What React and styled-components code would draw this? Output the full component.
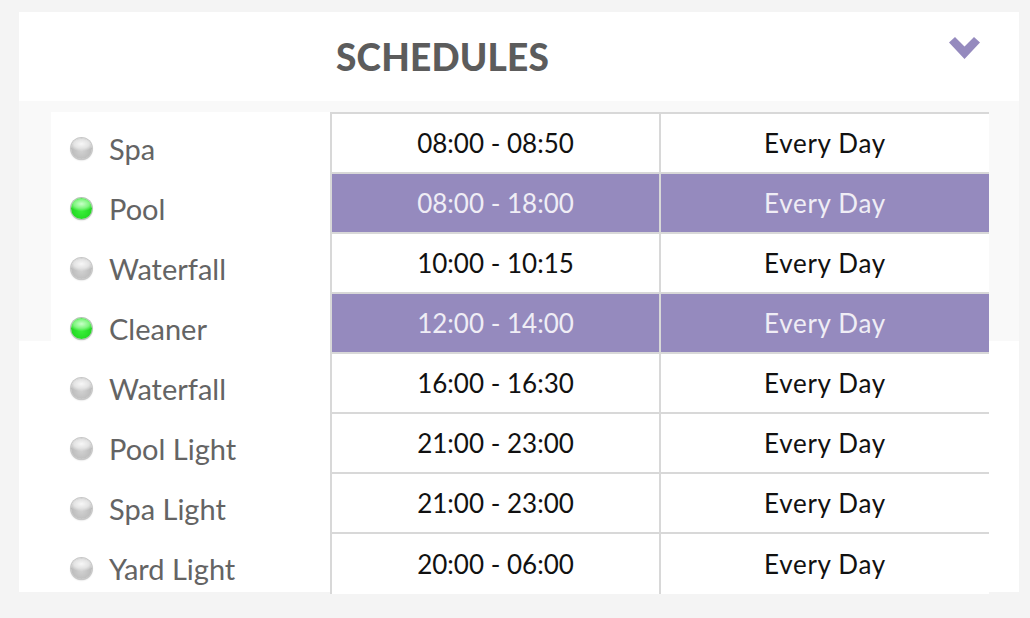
import React from "react";
import styled, { createGlobalStyle } from "styled-components";

const Global = createGlobalStyle`
  html, body { margin: 0; padding: 0; }
  body {
    background: #f4f4f4;
    font-family: Lato, "Open Sans", "Liberation Sans", sans-serif;
  }
`;

const Page = styled.div`
  padding: 12px 11px 26px 19px;
`;

const Card = styled.section`
  width: 1000px;
  height: 580px;
  background: #ffffff;
  display: flex;
  flex-direction: column;
`;

const Header = styled.header`
  flex: none;
  height: 89px;
  display: flex;
  align-items: center;
  padding: 0 39px 0 317px;
  box-sizing: border-box;
`;

const Title = styled.h2`
  margin: 0;
  font-family: Lato, "Open Sans", sans-serif;
  font-weight: 900;
  font-size: 37px;
  color: #5c5c5c;
  letter-spacing: 0.2px;
`;

const Toggle = styled.button`
  margin-left: auto;
  margin-top: -17px;
  border: 0;
  background: none;
  padding: 0;
  width: 31px;
  height: 22px;
  display: flex;
  cursor: pointer;
`;

const Body = styled.div`
  flex: 1;
  min-height: 0;
  display: flex;
  padding: 11px 0 0 32px;
  background: linear-gradient(#f9f9f9 0 240px, #ffffff 240px);
`;

const List = styled.ul`
  list-style: none;
  margin: 0;
  padding: 6px 0 0 20px;
  width: 279px;
  box-sizing: border-box;
  background: #ffffff;
  overflow: hidden;
`;

const Item = styled.li`
  height: 60px;
  display: flex;
  align-items: center;
  gap: 17px;
  font-size: 29px;
  color: #646464;
`;

const Dot = styled.span`
  width: 21px;
  height: 21px;
  border-radius: 50%;
  flex: none;
  box-shadow: 0 0 0 1px ${(p) => (p.$on ? "#b4c2b4" : "#c8c8c8")},
    0 1px 2px rgba(0, 0, 0, 0.3);
  background: ${(p) =>
    p.$on
      ? "radial-gradient(ellipse 60% 35% at 50% 28%, #c9ffc9 0%, #7ff57f 60%, transparent 100%), radial-gradient(circle at 50% 60%, #3cf03c 0%, #22d822 60%, #2aa62a 100%)"
      : "radial-gradient(ellipse 60% 35% at 50% 28%, #f7f7f7 0%, #e3e3e3 60%, transparent 100%), radial-gradient(circle at 50% 60%, #d2d2d2 0%, #bcbcbc 60%, #9a9a9a 100%)"};
`;

const Table = styled.div`
  width: 659px;
  height: 480px;
  display: grid;
  grid-template-columns: 329px 330px;
  grid-auto-rows: 60px;
  border-top: 2px solid #d8d8d8;
  box-sizing: border-box;
  background: #ffffff;
`;

const Cell = styled.div`
  border-left: 2px solid #d8d8d8;
  border-bottom: ${(p) => (p.$last ? "0" : "2px solid #d8d8d8")};
  display: flex;
  align-items: center;
  justify-content: center;
  font-size: 26px;
  letter-spacing: ${(p) => (p.$wide ? "0.7px" : "0")};
  background: ${(p) => (p.$active ? "#958abe" : "#ffffff")};
  color: ${(p) => (p.$active ? "#efedf5" : "#111111")};
`;

const devices = [
  { name: "Spa", on: false },
  { name: "Pool", on: true },
  { name: "Waterfall", on: false },
  { name: "Cleaner", on: true },
  { name: "Waterfall", on: false },
  { name: "Pool Light", on: false },
  { name: "Spa Light", on: false },
  { name: "Yard Light", on: false },
];

const schedules = [
  { time: "08:00 - 08:50", days: "Every Day", active: false },
  { time: "08:00 - 18:00", days: "Every Day", active: true },
  { time: "10:00 - 10:15", days: "Every Day", active: false },
  { time: "12:00 - 14:00", days: "Every Day", active: true },
  { time: "16:00 - 16:30", days: "Every Day", active: false },
  { time: "21:00 - 23:00", days: "Every Day", active: false },
  { time: "21:00 - 23:00", days: "Every Day", active: false },
  { time: "20:00 - 06:00", days: "Every Day", active: false },
];

function Chevron() {
  return (
    <svg width="31" height="22" viewBox="0 0 31 22">
      <polygon
        points="0,5.5 6,0 15.5,9.5 25,0 31,5.5 15.5,22"
        fill="#958abe"
      />
    </svg>
  );
}

export default function App() {
  return (
    <>
      <Global />
      <Page>
        <Card>
          <Header>
            <Title>SCHEDULES</Title>
            <Toggle aria-label="Collapse">
              <Chevron />
            </Toggle>
          </Header>
          <Body>
            <List>
              {devices.map((d, i) => (
                <Item key={i}>
                  <Dot $on={d.on} />
                  {d.name}
                </Item>
              ))}
            </List>
            <Table>
              {schedules.map((s, i) => {
                const last = i === schedules.length - 1;
                return (
                  <React.Fragment key={i}>
                    <Cell $active={s.active} $last={last}>{s.time}</Cell>
                    <Cell $active={s.active} $last={last} $wide>{s.days}</Cell>
                  </React.Fragment>
                );
              })}
            </Table>
          </Body>
        </Card>
      </Page>
    </>
  );
}
